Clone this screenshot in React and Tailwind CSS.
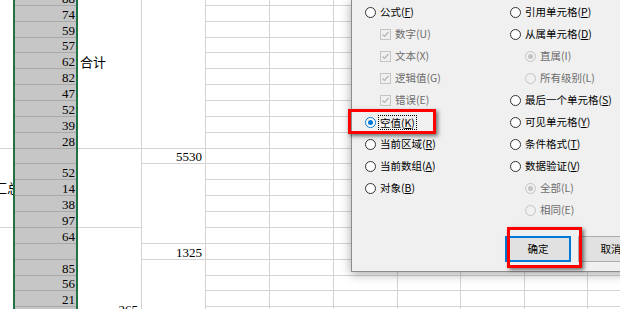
import React from 'react';

// row heights of the visible sheet rows (gridline sits on the last pixel of each)
const ROWS = ['h-[6px]', 'h-[16px]', 'h-[16px]', 'h-[15px]', 'h-[16px]', 'h-[16px]', 'h-[16px]', 'h-[16px]', 'h-[16px]', 'h-[16px]', 'h-[15px]', 'h-[16px]', 'h-[16px]', 'h-[16px]', 'h-[16px]', 'h-[16px]', 'h-[16px]', 'h-[16px]', 'h-[15px]', 'h-[16px]', 'h-[16px]'];

const VALUES = ['88', '74', '59', '57', '62', '82', '47', '52', '39', '28', '', '52', '14', '38', '97', '64', '', '85', '56', '21', ''];

const ALL = ROWS.map((_, i) => i);

function SheetCol({ w, lines, render }) {
  return (
    <div className={`${w} shrink-0 border-r border-[#d4d4d4]`}>
      {ROWS.map((h, i) => (
        <div key={i} className={`${h} flex items-end leading-none ${lines.includes(i) ? 'border-b border-[#d4d4d4]' : ''}`}>
          {render ? render(i) : null}
        </div>
      ))}
    </div>
  );
}

function Radio({ checked, disabled }) {
  if (disabled) {
    return (
      <span className="w-[11px] h-[11px] shrink-0 rounded-full border border-[#c4c4c4] flex items-center justify-center">
        {checked && <span className="w-[5px] h-[5px] rounded-full bg-[#c4c4c4]" />}
      </span>
    );
  }
  return (
    <span className={`w-[11px] h-[11px] shrink-0 rounded-full border bg-white flex items-center justify-center ${checked ? 'border-[#0078d7]' : 'border-[#333]'}`}>
      {checked && <span className="w-[5px] h-[5px] rounded-full bg-[#0078d7]" />}
    </span>
  );
}

function Check() {
  return (
    <span className="w-[11px] h-[11px] shrink-0 border border-[#c4c4c4] flex items-center justify-center">
      <svg width="9" height="9" viewBox="0 0 9 9">
        <polyline points="1.5,4.5 3.5,6.5 7.5,2" fill="none" stroke="#b4b4b4" strokeWidth="1.2" />
      </svg>
    </span>
  );
}

function Label({ text, k, disabled }) {
  if (disabled) return <span className="text-[#6d6d6d]">{text}({k})</span>;
  return (
    <span>
      {text}(<u className="underline-offset-[1px]">{k}</u>)
    </span>
  );
}

function Option({ type = 'radio', text, k, checked, disabled, indent, focus }) {
  return (
    <div className={`h-[22px] flex items-center gap-[4px] ${indent ? 'pl-[15px]' : ''}`}>
      {type === 'check' ? <Check /> : <Radio checked={checked} disabled={disabled} />}
      {focus ? (
        <span className="-ml-[2px] px-[1px] border border-dotted border-black leading-[13px]">
          <Label text={text} k={k} disabled={disabled} />
        </span>
      ) : (
        <Label text={text} k={k} disabled={disabled} />
      )}
    </div>
  );
}

const LEFT = [
  { text: '公式', k: 'F' },
  { type: 'check', text: '数字', k: 'U', disabled: true, indent: true },
  { type: 'check', text: '文本', k: 'X', disabled: true, indent: true },
  { type: 'check', text: '逻辑值', k: 'G', disabled: true, indent: true },
  { type: 'check', text: '错误', k: 'E', disabled: true, indent: true },
  { text: '空值', k: 'K', checked: true, focus: true },
  { text: '当前区域', k: 'R' },
  { text: '当前数组', k: 'A' },
  { text: '对象', k: 'B' },
];

const RIGHT = [
  { text: '引用单元格', k: 'P' },
  { text: '从属单元格', k: 'D' },
  { text: '直属', k: 'I', disabled: true, checked: true, indent: true },
  { text: '所有级别', k: 'L', disabled: true, indent: true },
  { text: '最后一个单元格', k: 'S' },
  { text: '可见单元格', k: 'Y' },
  { text: '条件格式', k: 'T' },
  { text: '数据验证', k: 'V' },
  { text: '全部', k: 'L', disabled: true, checked: true, indent: true },
  { text: '相同', k: 'E', disabled: true, indent: true },
];

export default function App() {
  return (
    <div className="relative w-[620px] h-[309px] overflow-hidden bg-white text-black">
      {/* worksheet */}
      <div className="flex font-['Liberation_Serif','Noto_Sans_CJK_SC',serif] text-[13px]">
        <div className="w-[13px] shrink-0 overflow-hidden">
          {ROWS.map((h, i) => (
            <div key={i} className={`${h} flex items-center whitespace-nowrap leading-none ${i === 9 || i === 14 ? 'border-b border-[#d4d4d4]' : ''}`}>
              {i === 12 && <span className="-ml-[6px]">汇总</span>}
            </div>
          ))}
        </div>
        <div className="w-[65px] shrink-0 border-x-2 border-[#217346] bg-[#c6c6c6]">
          {ROWS.map((h, i) => (
            <div key={i} className={`${h} flex items-end justify-end pr-[1px] leading-none border-b border-[#a9a9a9]`}>
              {VALUES[i]}
            </div>
          ))}
        </div>
        <SheetCol
          w="w-[64px]"
          lines={[9, 14]}
          render={(i) =>
            i === 4 ? (
              <span className="pl-[2px]">合计</span>
            ) : i === 19 ? (
              <span className="ml-auto pr-[3px] -mb-[9px]">265</span>
            ) : null
          }
        />
        <SheetCol
          w="w-[64px]"
          lines={[9, 10, 15, 16]}
          render={(i) => (i === 10 ? <span className="ml-auto pr-[3px]">5530</span> : i === 16 ? <span className="ml-auto pr-[3px]">1325</span> : null)}
        />
        <SheetCol w="w-[64px]" lines={ALL} />
        <SheetCol w="w-[64px]" lines={ALL} />
        <SheetCol w="w-[64px]" lines={ALL} />
        <SheetCol w="w-[63px]" lines={ALL} />
        <SheetCol w="w-[64px]" lines={ALL} />
        <SheetCol w="w-[63px]" lines={ALL} />
        <SheetCol w="w-[64px]" lines={ALL} />
      </div>

      {/* Go To Special dialog */}
      <div className="absolute left-[351px] top-0 w-[330px] h-[272px] bg-[#f0f0f0] border-l border-b border-[#8c8c8c] shadow-[0_2px_10px_rgba(0,0,0,0.35)] font-['Noto_Sans_CJK_SC',sans-serif] text-[10.5px] leading-none">
        <div className="flex pt-[1px]">
          <div className="w-[158px] pl-[13px]">
            {LEFT.map((o, i) => (
              <Option key={i} {...o} />
            ))}
          </div>
          <div>
            {RIGHT.map((o, i) => (
              <Option key={i} {...o} />
            ))}
          </div>
        </div>
        <div className="flex gap-[7px] pl-[153px] mt-[15px]">
          <button className="w-[66px] h-[26px] shrink-0 bg-[#e1e1e1] border border-[#0078d7] shadow-[inset_0_0_0_1px_#0078d7]">确定</button>
          <button className="w-[66px] h-[26px] shrink-0 bg-[#e1e1e1] border border-[#adadad]">取消</button>
        </div>
      </div>

      {/* red highlight boxes */}
      <div className="absolute left-[348px] top-[109px] w-[88px] h-[25px] border-[3px] border-[#ff0000] shadow-[2px_2px_4px_rgba(0,0,0,0.55)]" />
      <div className="absolute left-[507px] top-[227px] w-[75px] h-[41px] border-[3px] border-[#ff0000] shadow-[2px_2px_4px_rgba(0,0,0,0.55)]" />
    </div>
  );
}
